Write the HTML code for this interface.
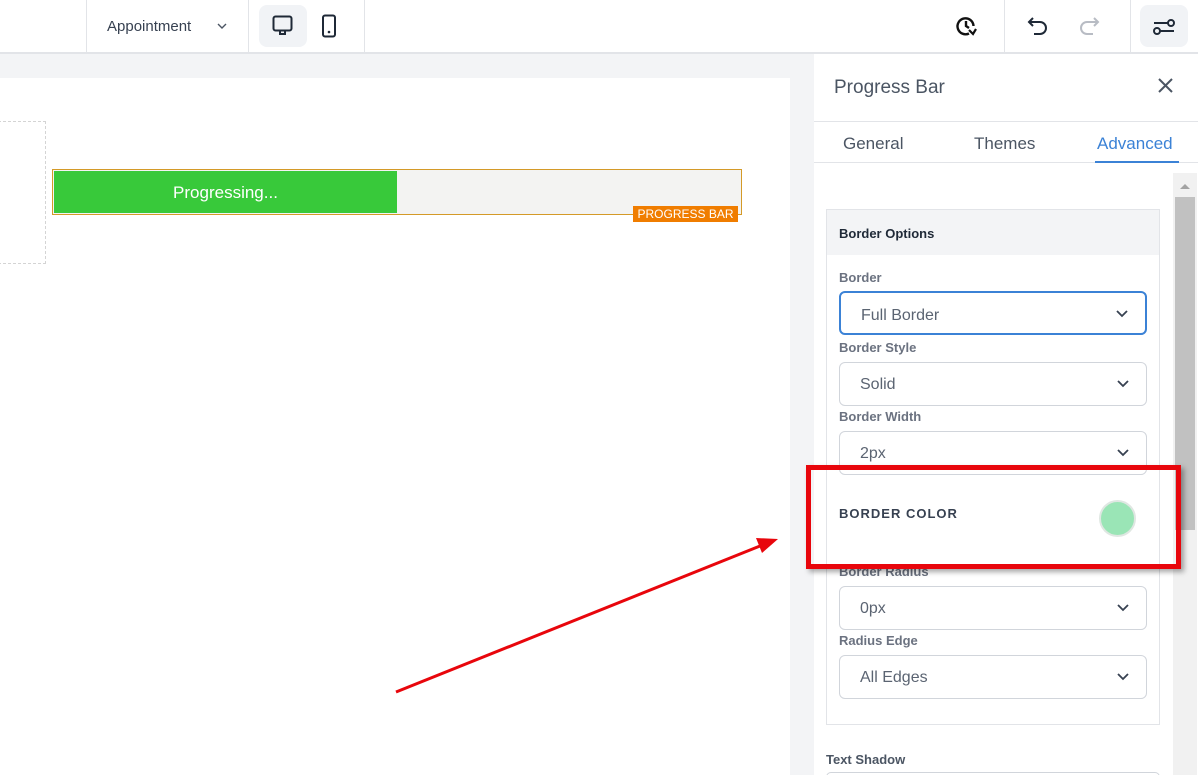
<!DOCTYPE html>
<html><head><style>
*{box-sizing:border-box;margin:0;padding:0}
html,body{width:1198px;height:775px;overflow:hidden}
body{background:#f3f4f6;font-family:"Liberation Sans",sans-serif;position:relative}
.abs{position:absolute}
.top{left:0;top:0;width:1198px;height:54px;background:#fff;border-bottom:2px solid #e2e4e8}
.vd{top:0;width:1px;height:53px;background:#e2e4e8}
.lbl{position:absolute;left:839px;font-size:13px;font-weight:bold;color:#6b7280}
.sel{position:absolute;left:839px;width:308px;height:44px;border:1px solid #d1d5db;border-radius:6px;font-size:16px;color:#5b6472;padding:13px 0 0 20px}
.sel svg{position:absolute;right:16px;top:16px}
</style></head><body>
<div class="abs top"></div>
<div class="abs vd" style="left:86px"></div>
<div class="abs vd" style="left:248px"></div>
<div class="abs vd" style="left:364px"></div>
<div class="abs vd" style="left:1004px"></div>
<div class="abs vd" style="left:1130px"></div>
<div class="abs" style="left:107px;top:18px;font-size:15px;color:#374151">Appointment</div>
<svg class="abs" style="left:216px;top:21px" width="12" height="10"><path d="M2 3l4 4 4-4" stroke="#4b5563" stroke-width="1.4" fill="none"/></svg>
<div class="abs" style="left:259px;top:5px;width:48px;height:42px;background:#f1f3f6;border-radius:8px"></div>
<svg class="abs" style="left:271px;top:14px" width="24" height="24"><rect x="2.5" y="2.5" width="18" height="14" rx="2" stroke="#1f2937" stroke-width="2" fill="none"/><path d="M9 17v3h5v-3" stroke="#1f2937" stroke-width="2" fill="none"/></svg>
<svg class="abs" style="left:320px;top:14px" width="24" height="26"><rect x="3" y="1.5" width="12" height="21" rx="2" stroke="#1f2937" stroke-width="2" fill="none"/><circle cx="9" cy="18" r="1.3" fill="#1f2937"/></svg>
<svg class="abs" style="left:954px;top:14px" width="26" height="26"><path d="M19.5 12A8 8 0 1 0 15 19.5" stroke="#111" stroke-width="2.4" fill="none"/><path d="M12 7v5l3 2" stroke="#111" stroke-width="2.4" fill="none"/><path d="M15 16l4 4 3-5" stroke="#111" stroke-width="2.2" fill="none"/></svg>
<svg class="abs" style="left:1027px;top:14px" width="24" height="24"><path d="M6 4L2 8l4 4M2 8h11a6 6 0 0 1 0 12H7" stroke="#1f2937" stroke-width="2" fill="none"/></svg>
<svg class="abs" style="left:1076px;top:14px" width="24" height="24"><path d="M18 4l4 4-4 4M22 8H11a6 6 0 0 0 0 12h6" stroke="#b8bcc4" stroke-width="2" fill="none"/></svg>
<div class="abs" style="left:1140px;top:5px;width:48px;height:42px;background:#f1f3f6;border-radius:8px"></div>
<svg class="abs" style="left:1152px;top:14px" width="24" height="24"><path d="M2 9h14M8 17h14" stroke="#1f2937" stroke-width="2"/><circle cx="19" cy="9" r="3" fill="#f1f3f6" stroke="#1f2937" stroke-width="2"/><circle cx="5" cy="17" r="3" fill="#f1f3f6" stroke="#1f2937" stroke-width="2"/></svg>

<div class="abs" style="left:0;top:78px;width:790px;height:697px;background:#fff"></div>
<div class="abs" style="left:-2px;top:121px;width:48px;height:143px;border:1px dashed #d4d4d4"></div>
<div class="abs" style="left:52px;top:169px;width:690px;height:46px;border:1px solid #d49a28;background:#f3f3f2"></div>
<div class="abs" style="left:54px;top:171px;width:343px;height:42px;background:#38c93a;color:#fff;font-size:17px;text-align:center;line-height:43px">Progressing...</div>
<div class="abs" style="left:633px;top:206px;width:105px;height:16px;background:#f07d00;color:#fff;font-size:12px;text-align:center;line-height:16px">PROGRESS BAR</div>

<div class="abs" style="left:814px;top:54px;width:384px;height:721px;background:#fff"></div>
<div class="abs" style="left:834px;top:77px;font-size:19px;color:#4b5563">Progress Bar</div>
<svg class="abs" style="left:1157px;top:77px" width="17" height="17"><path d="M2 2l13 13M15 2L2 15" stroke="#4b5563" stroke-width="2"/></svg>
<div class="abs" style="left:814px;top:121px;width:384px;height:1px;background:#e2e4e8"></div>
<div class="abs" style="left:843px;top:134px;font-size:17px;color:#4b5563">General</div>
<div class="abs" style="left:974px;top:134px;font-size:17px;color:#4b5563">Themes</div>
<div class="abs" style="left:1097px;top:134px;font-size:17px;color:#3b82d6">Advanced</div>
<div class="abs" style="left:814px;top:162px;width:384px;height:1px;background:#e2e4e8"></div>
<div class="abs" style="left:1095px;top:161px;width:84px;height:2px;background:#3b82d6"></div>
<div class="abs" style="left:1173px;top:173px;width:24px;height:602px;background:#f1f1f1"></div>
<div class="abs" style="left:1175px;top:197px;width:20px;height:333px;background:#c1c1c1"></div>
<svg class="abs" style="left:1178px;top:182px" width="14" height="8"><path d="M2 7l5-5 5 5z" fill="#a3a3a3"/></svg>

<div class="abs" style="left:826px;top:209px;width:334px;height:516px;border:1px solid #e2e4e8;background:#fff"></div>
<div class="abs" style="left:827px;top:210px;width:332px;height:45px;background:#f3f4f6"></div>
<div class="abs" style="left:839px;top:226px;font-size:13px;font-weight:bold;color:#1f2937">Border Options</div>
<div class="lbl" style="top:270px">Border</div>
<div class="sel" style="top:291px;border:2px solid #3b82d6;padding-top:14px">Full Border<svg width="14" height="10"><path d="M2 2l5 5 5-5" stroke="#374151" stroke-width="1.8" fill="none"/></svg></div>
<div class="lbl" style="top:340px">Border Style</div>
<div class="sel" style="top:362px">Solid<svg width="14" height="10"><path d="M2 2l5 5 5-5" stroke="#374151" stroke-width="1.8" fill="none"/></svg></div>
<div class="lbl" style="top:409px">Border Width</div>
<div class="sel" style="top:431px">2px<svg width="14" height="10"><path d="M2 2l5 5 5-5" stroke="#374151" stroke-width="1.8" fill="none"/></svg></div>
<div class="abs" style="left:839px;top:506px;font-size:13px;font-weight:bold;color:#374151;letter-spacing:1px">BORDER COLOR</div>
<div class="abs" style="left:1099px;top:500px;width:37px;height:37px;border-radius:50%;background:#9ae5b6;border:2px solid #dfe7e2"></div>
<div class="lbl" style="top:564px">Border Radius</div>
<div class="sel" style="top:586px">0px<svg width="14" height="10"><path d="M2 2l5 5 5-5" stroke="#374151" stroke-width="1.8" fill="none"/></svg></div>
<div class="lbl" style="top:633px">Radius Edge</div>
<div class="sel" style="top:655px">All Edges<svg width="14" height="10"><path d="M2 2l5 5 5-5" stroke="#374151" stroke-width="1.8" fill="none"/></svg></div>
<div class="abs" style="left:826px;top:752px;font-size:13px;font-weight:bold;color:#4b5563">Text Shadow</div>
<div class="abs" style="left:826px;top:772px;width:334px;height:10px;border:1px solid #d1d5db;border-radius:6px"></div>

<div class="abs" style="left:806px;top:465px;width:375px;height:104px;border:5px solid #e8060c;box-shadow:3px 3px 5px rgba(0,0,0,.35)"></div>
<svg class="abs" style="left:0;top:0" width="1198" height="775"><line x1="396" y1="692" x2="760" y2="546" stroke="#e8060c" stroke-width="3"/><path d="M778 539l-22 -1 6 15z" fill="#e8060c"/></svg>
</body></html>
